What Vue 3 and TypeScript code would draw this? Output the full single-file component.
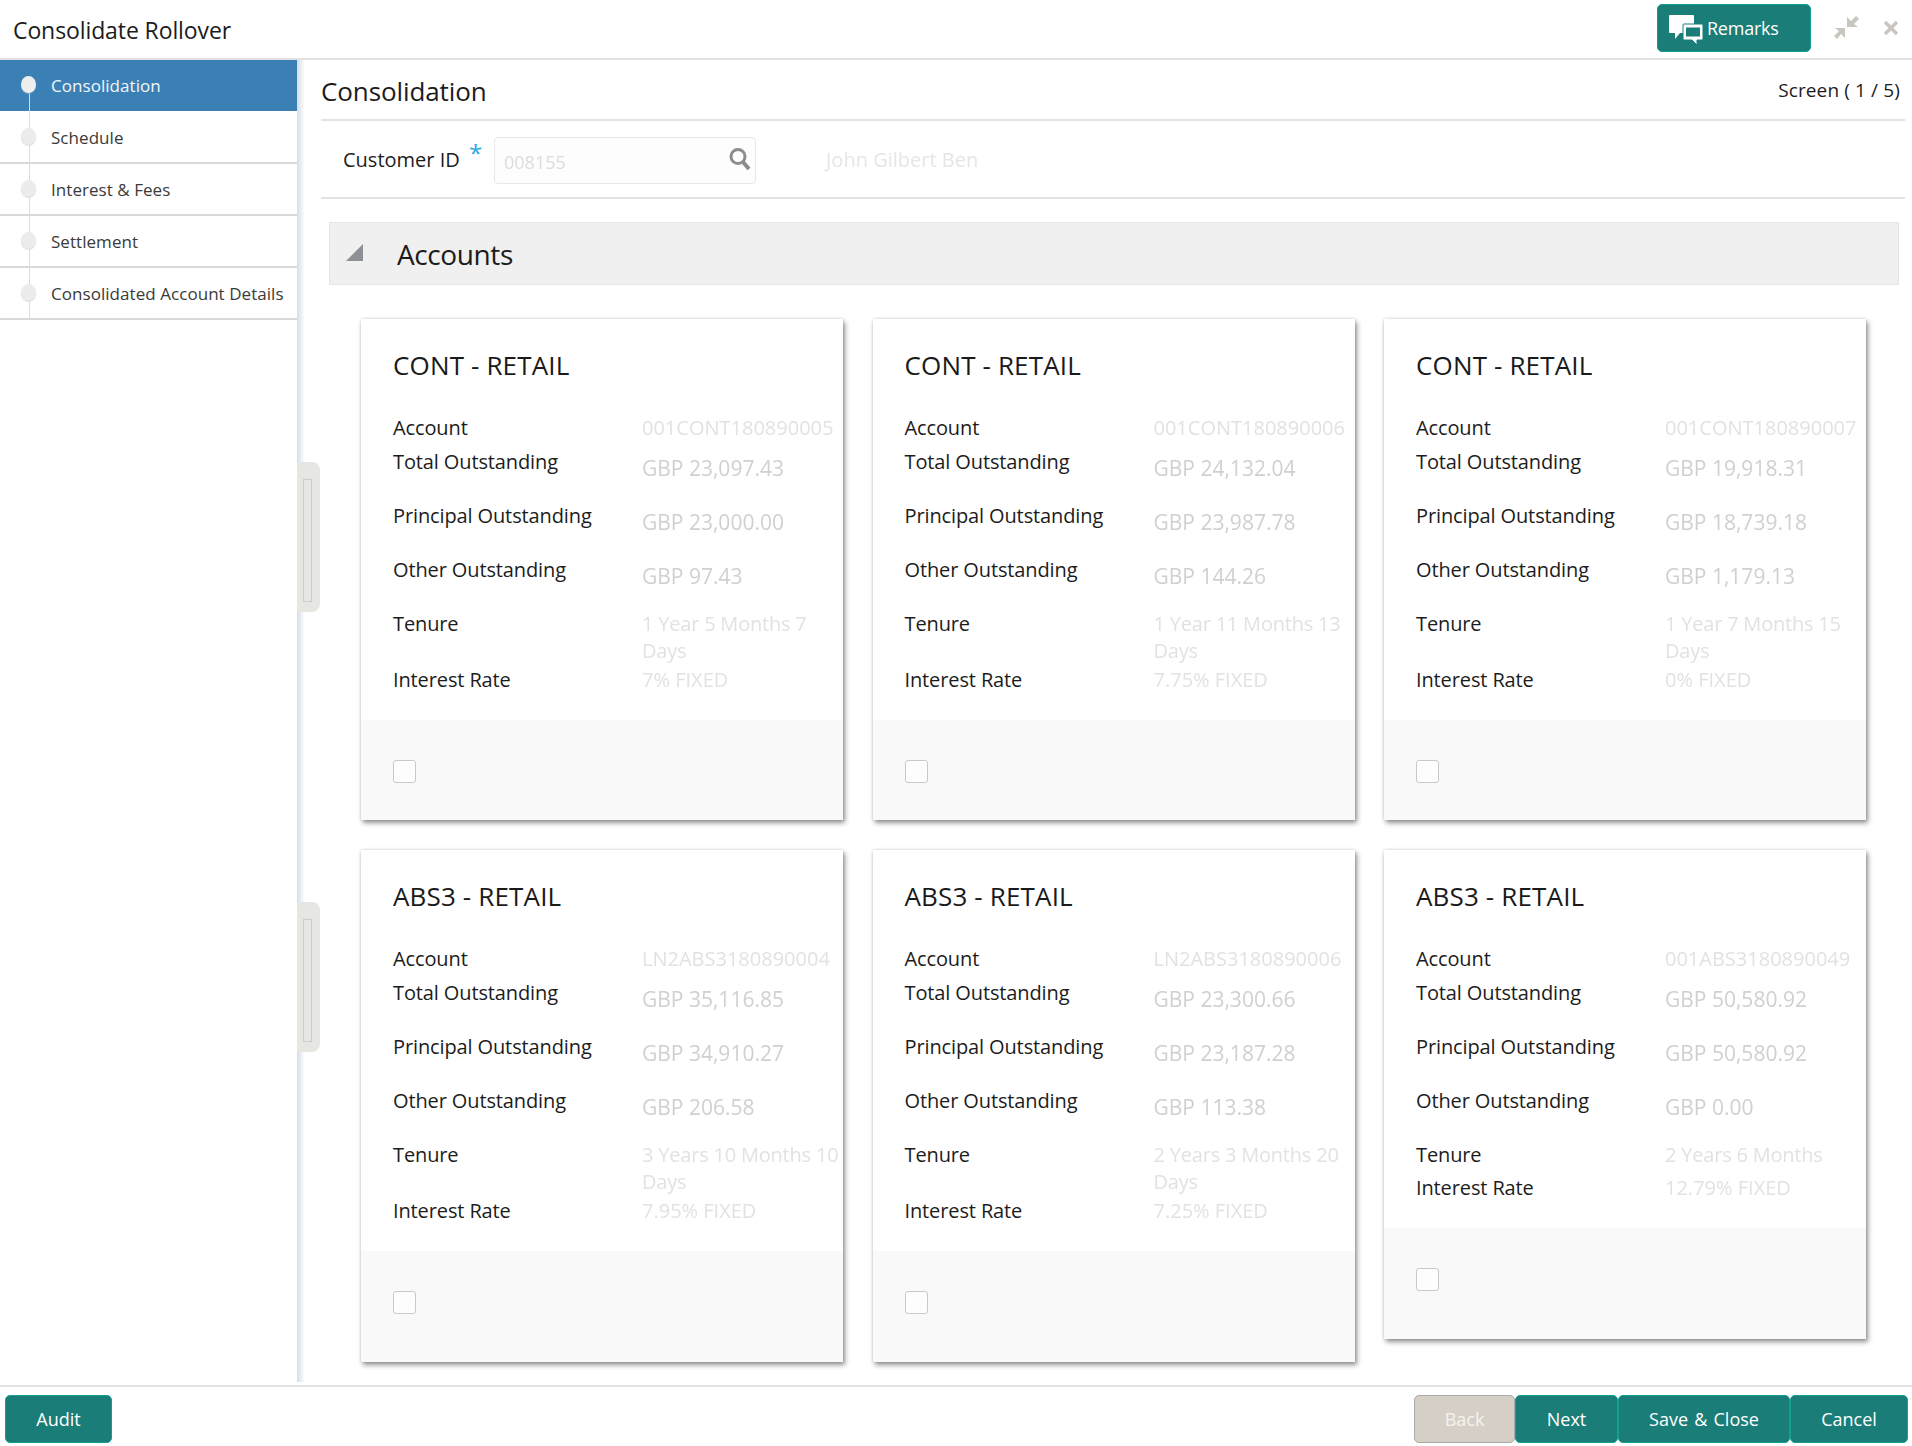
<script setup lang="ts">
interface Card {
  title: string
  account: string
  total: string
  principal: string
  other: string
  tenure: string
  rate: string
  compact?: boolean
  tallFooter?: boolean
}

const steps: string[] = ['Consolidation', 'Schedule', 'Interest & Fees', 'Settlement', 'Consolidated Account Details']

const cards: Card[] = [
  { title: 'CONT - RETAIL', account: '001CONT180890005', total: 'GBP 23,097.43', principal: 'GBP 23,000.00', other: 'GBP 97.43', tenure: '1 Year 5 Months 7 Days', rate: '7% FIXED' },
  { title: 'CONT - RETAIL', account: '001CONT180890006', total: 'GBP 24,132.04', principal: 'GBP 23,987.78', other: 'GBP 144.26', tenure: '1 Year 11 Months 13 Days', rate: '7.75% FIXED' },
  { title: 'CONT - RETAIL', account: '001CONT180890007', total: 'GBP 19,918.31', principal: 'GBP 18,739.18', other: 'GBP 1,179.13', tenure: '1 Year 7 Months 15 Days', rate: '0% FIXED' },
  { title: 'ABS3 - RETAIL', account: 'LN2ABS3180890004', total: 'GBP 35,116.85', principal: 'GBP 34,910.27', other: 'GBP 206.58', tenure: '3 Years 10 Months 10 Days', rate: '7.95% FIXED', tallFooter: true },
  { title: 'ABS3 - RETAIL', account: 'LN2ABS3180890006', total: 'GBP 23,300.66', principal: 'GBP 23,187.28', other: 'GBP 113.38', tenure: '2 Years 3 Months 20 Days', rate: '7.25% FIXED', tallFooter: true },
  { title: 'ABS3 - RETAIL', account: '001ABS3180890049', total: 'GBP 50,580.92', principal: 'GBP 50,580.92', other: 'GBP 0.00', tenure: '2 Years 6 Months', rate: '12.79% FIXED', compact: true, tallFooter: true },
]
</script>

<template>
  <div class="page">
    <header class="topbar">
      <h1 class="app-title">Consolidate Rollover</h1>
      <div class="top-actions">
        <button class="btn btn-remarks" type="button">
          <svg class="remarks-icon" width="36" height="32" viewBox="0 0 36 32">
            <path d="M2 1h23a1 1 0 0 1 1 1v17H12l-5 6 0-6H2a1 1 0 0 1-1-1V2a1 1 0 0 1 1-1z" fill="#fff" />
            <path d="M16 10h18a1 1 0 0 1 1 1v14a1 1 0 0 1-1 1h-5v5l-5-5h-8a1 1 0 0 1-1-1V11a1 1 0 0 1 1-1z" fill="#fff" stroke="#1b7d78" stroke-width="1" />
            <rect x="18" y="13.5" width="14" height="9" fill="#1b7d78" />
          </svg>
          <span>Remarks</span>
        </button>
        <svg class="compress-icon" width="26" height="26" viewBox="0 0 26 26">
          <path d="M13 12V2l4 4 5-5 3 3-5 5 4 3z" fill="#c9c6c0" />
          <path d="M11 13v10l-4-4-4 5-3-3 5-5-4-3z" fill="#c9c6c0" />
        </svg>
        <svg class="close-icon" width="16" height="16" viewBox="0 0 16 16">
          <path d="M2 2l12 12M14 2L2 14" stroke="#c9c6c0" stroke-width="3.4" fill="none" />
        </svg>
      </div>
    </header>

    <div class="main">
      <nav class="sidebar">
        <div class="rail"></div>
        <div v-for="(step, i) in steps" :key="step" class="step" :class="{ 'step-active': i === 0 }">
          <span class="dot"></span>
          <span class="step-label">{{ step }}</span>
        </div>
        <div class="handle handle-one"><span class="grip"></span></div>
        <div class="handle handle-two"><span class="grip"></span></div>
      </nav>

      <section class="content">
        <div class="title-row">
          <h2 class="screen-title">Consolidation</h2>
          <span class="screen-count">Screen ( 1 / 5)</span>
        </div>

        <div class="customer-row">
          <label class="customer-label">Customer ID</label>
          <span class="star">*</span>
          <div class="customer-input">
            <span class="customer-value">008155</span>
            <svg class="search-icon" width="24" height="24" viewBox="0 0 24 24">
              <circle cx="10" cy="9.5" r="7" fill="none" stroke="#8c8c8c" stroke-width="3" />
              <path d="M15 15l6 7" stroke="#8c8c8c" stroke-width="4" fill="none" />
            </svg>
          </div>
          <span class="customer-name">John Gilbert Ben</span>
        </div>

        <div class="accordion">
          <svg class="caret" width="18" height="17" viewBox="0 0 18 17"><path d="M17 0v17H0z" fill="#8d9094" /></svg>
          <span class="accordion-title">Accounts</span>
        </div>

        <div class="cards">
          <article v-for="card in cards" :key="card.account" class="card" :class="{ 'card-compact': card.compact }">
            <div class="card-body">
              <h3 class="card-title">{{ card.title }}</h3>
              <div class="row row-account">
                <span class="label">Account</span>
                <span class="value value-faint">{{ card.account }}</span>
              </div>
              <div class="row">
                <span class="label">Total Outstanding</span>
                <span class="value value-money">{{ card.total }}</span>
              </div>
              <div class="row">
                <span class="label">Principal Outstanding</span>
                <span class="value value-money">{{ card.principal }}</span>
              </div>
              <div class="row">
                <span class="label">Other Outstanding</span>
                <span class="value value-money">{{ card.other }}</span>
              </div>
              <div class="row row-tenure">
                <span class="label">Tenure</span>
                <span class="value value-faint value-tenure">{{ card.tenure }}</span>
              </div>
              <div class="row row-rate">
                <span class="label">Interest Rate</span>
                <span class="value value-faint">{{ card.rate }}</span>
              </div>
            </div>
            <div class="card-footer" :class="{ 'card-footer-tall': card.tallFooter }">
              <span class="checkbox"></span>
            </div>
          </article>
        </div>
      </section>
    </div>

    <footer class="bottombar">
      <button class="btn btn-wide" type="button">Audit</button>
      <div class="bottom-actions">
        <button class="btn btn-back" type="button">Back</button>
        <button class="btn btn-next" type="button">Next</button>
        <button class="btn btn-save" type="button">Save &amp; Close</button>
        <button class="btn btn-cancel" type="button">Cancel</button>
      </div>
    </footer>
  </div>
</template>

<style>
html, body { margin: 0; background: #fff; }
</style>

<style scoped>
* { box-sizing: border-box; }
.page {
  width: 1912px;
  height: 1446px;
  display: flex;
  flex-direction: column;
  overflow: hidden;
  font-family: "Open Sans", "Noto Sans", sans-serif;
  color: #1c1c1c;
  background: #fff;
}
.topbar {
  height: 60px;
  flex: none;
  display: flex;
  align-items: flex-start;
  justify-content: space-between;
  border-bottom: 2px solid #e2e2e2;
  padding-left: 13px;
}
.app-title {
  margin: 14px 0 0;
  font-size: 23px;
  line-height: 32px;
  font-weight: 400;
  letter-spacing: -0.1px;
}
.top-actions {
  display: flex;
  align-items: flex-start;
}
.btn {
  height: 48px;
  border: 1px solid #12a08f;
  border-radius: 5px;
  background: #1b7d78;
  color: #fff;
  font-family: inherit;
  font-size: 18px;
  word-spacing: 1.5px;
  padding: 0;
  display: inline-flex;
  align-items: center;
  justify-content: center;
}
.btn-remarks {
  width: 154px;
  margin-top: 4px;
  justify-content: flex-start;
  padding-left: 10px;
  letter-spacing: -0.25px;
}
.remarks-icon { margin-right: 3px; margin-top: 3px; flex: none; }
.compress-icon { margin: 15px 0 0 23px; }
.close-icon { margin: 20px 13px 0 23px; }

.main {
  height: 1325px;
  flex: none;
  display: flex;
}
.sidebar {
  width: 297px;
  flex: none;
  position: relative;
  height: 1322px;
}
.sidebar::after {
  content: "";
  position: absolute;
  top: 0;
  right: -7px;
  width: 7px;
  height: 100%;
  background: linear-gradient(90deg, #d6dde9, #fafbfc);
}
.rail {
  position: absolute;
  left: 29px;
  top: 30px;
  width: 1px;
  height: 230px;
  background: #dcdcdc;
  z-index: 1;
}
.step {
  height: 52px;
  position: relative;
  display: flex;
  align-items: center;
  padding-left: 51px;
  border-bottom: 2px solid #d9d9d6;
  font-size: 17px;
  letter-spacing: 0.05px;
  color: #3a3a3a;
}
.step-active {
  height: 51px;
  margin-bottom: 1px;
  background: #3b80b4;
  color: #f2f6fa;
  border-bottom: none;
}
.dot {
  position: absolute;
  left: 21px;
  top: 16px;
  width: 15px;
  height: 17px;
  border-radius: 50%;
  background: #ececec;
  box-shadow: 0 1px 1px #dcdcdc;
  z-index: 2;
}
.step-active .dot { background: #eeeeee; box-shadow: 0 1px 1px #7fa5c5; }
.step-label { position: relative; white-space: nowrap; }
.handle {
  position: absolute;
  left: 297px;
  width: 23px;
  height: 150px;
  background: #e6e6e3;
  border-radius: 0 8px 8px 0;
  z-index: 3;
  display: flex;
  align-items: center;
  padding: 6px 0 0 6px;
}
.handle-one { top: 402px; }
.handle-two { top: 842px; }
.grip {
  width: 9px;
  height: 123px;
  border: 1px solid #cccccb;
}

.content {
  flex: 1;
  min-width: 0;
  padding: 0 7px 0 24px;
}
.title-row {
  height: 61px;
  display: flex;
  align-items: center;
  justify-content: space-between;
  border-bottom: 2px solid #e2e2e2;
}
.screen-title {
  margin: 2px 0 0;
  font-size: 26px;
  font-weight: 400;
  letter-spacing: -0.1px;
}
.screen-count {
  font-size: 19px;
  letter-spacing: 0.13px;
  margin-right: 5px;
}
.customer-row {
  height: 78px;
  display: flex;
  align-items: flex-start;
  border-bottom: 2px solid #e2e2e2;
  padding-left: 22px;
}
.customer-label {
  margin-top: 25px;
  font-size: 20px;
  line-height: 28px;
  width: 117px;
  white-space: nowrap;
}
.star {
  margin: 18px 0 0 9px;
  font-size: 24px;
  line-height: 28px;
  color: #2aa9df;
  width: 15px;
}
.customer-input {
  width: 262px;
  height: 47px;
  margin: 16px 0 0 10px;
  border: 1px solid #e8e8e8;
  border-radius: 4px;
  background: #fdfdfd;
  display: flex;
  align-items: center;
  justify-content: space-between;
  padding: 0 3px 0 9px;
}
.customer-value {
  font-size: 18px;
  color: #dcdcdc;
  filter: blur(0.6px);
  padding-top: 3px;
}
.search-icon { margin-bottom: 3px; }
.customer-name {
  margin: 25px 0 0 70px;
  font-size: 20px;
  line-height: 28px;
  color: #e6e6e6;
  filter: blur(0.7px);
}
.accordion {
  height: 63px;
  margin: 23px 6px 0 8px;
  background: #f0f0f0;
  border: 1px solid #e6e6e6;
  display: flex;
  align-items: center;
  padding-left: 16px;
}
.caret { flex: none; margin-top: -3px; }
.accordion-title {
  margin-left: 33px;
  font-size: 28px;
  letter-spacing: -0.4px;
}
.cards {
  display: grid;
  grid-template-columns: repeat(3, 482px);
  column-gap: 29.5px;
  row-gap: 30px;
  padding: 34px 0 0 40px;
}
.card {
  background: #fff;
  box-shadow: 2px 3px 5px rgba(0, 0, 0, 0.42), 0 0 3px rgba(0, 0, 0, 0.16);
  display: flex;
  flex-direction: column;
}
.card-compact { align-self: start; }
.card-body {
  padding: 0 0 0 32px;
  flex: none;
}
.card-title {
  margin: 0;
  padding-top: 29px;
  height: 95px;
  font-size: 26px;
  line-height: 34px;
  font-weight: 400;
  letter-spacing: 0.15px;
  color: #1a1a1a;
}
.row {
  display: grid;
  grid-template-columns: 249px 210px;
  height: 54px;
  font-size: 20px;
  line-height: 28px;
}
.row-account { height: 34px; }
.row-tenure { height: 56px; }
.row-rate { height: 54px; }
.card-compact .row-tenure { height: 33px; }
.label { white-space: nowrap; letter-spacing: -0.12px; }
.value { filter: blur(0.65px); }
.value-faint { color: #e2e2e2; line-height: 27px; }
.value-tenure { letter-spacing: -0.2px; }
.value-money { color: #d0d0d0; margin-top: 6px; font-size: 21px; white-space: nowrap; }
.card-footer {
  height: 100px;
  background: #f9f9f9;
  padding: 40px 0 0 32px;
  margin-top: auto;
}
.card-footer-tall { height: 111px; }
.card-compact .card-footer { margin-top: 0; }
.checkbox {
  display: block;
  width: 23px;
  height: 23px;
  border: 1px solid #c9c9c9;
  border-radius: 3px;
  background: #fdfdfd;
}

.bottombar {
  flex: 1;
  display: flex;
  align-items: flex-start;
  justify-content: space-between;
  border-top: 2px solid #e2e2e2;
  padding: 8px 4px 0 5px;
}
.btn-wide { width: 107px; }
.bottom-actions { display: flex; }
.btn-back {
  width: 101px;
  background: #d5cfc5;
  border-color: #a9a9a5;
  color: #f5f3ef;
}
.btn-next { width: 103px; }
.btn-save { width: 172px; }
.btn-cancel { width: 118px; }
</style>
